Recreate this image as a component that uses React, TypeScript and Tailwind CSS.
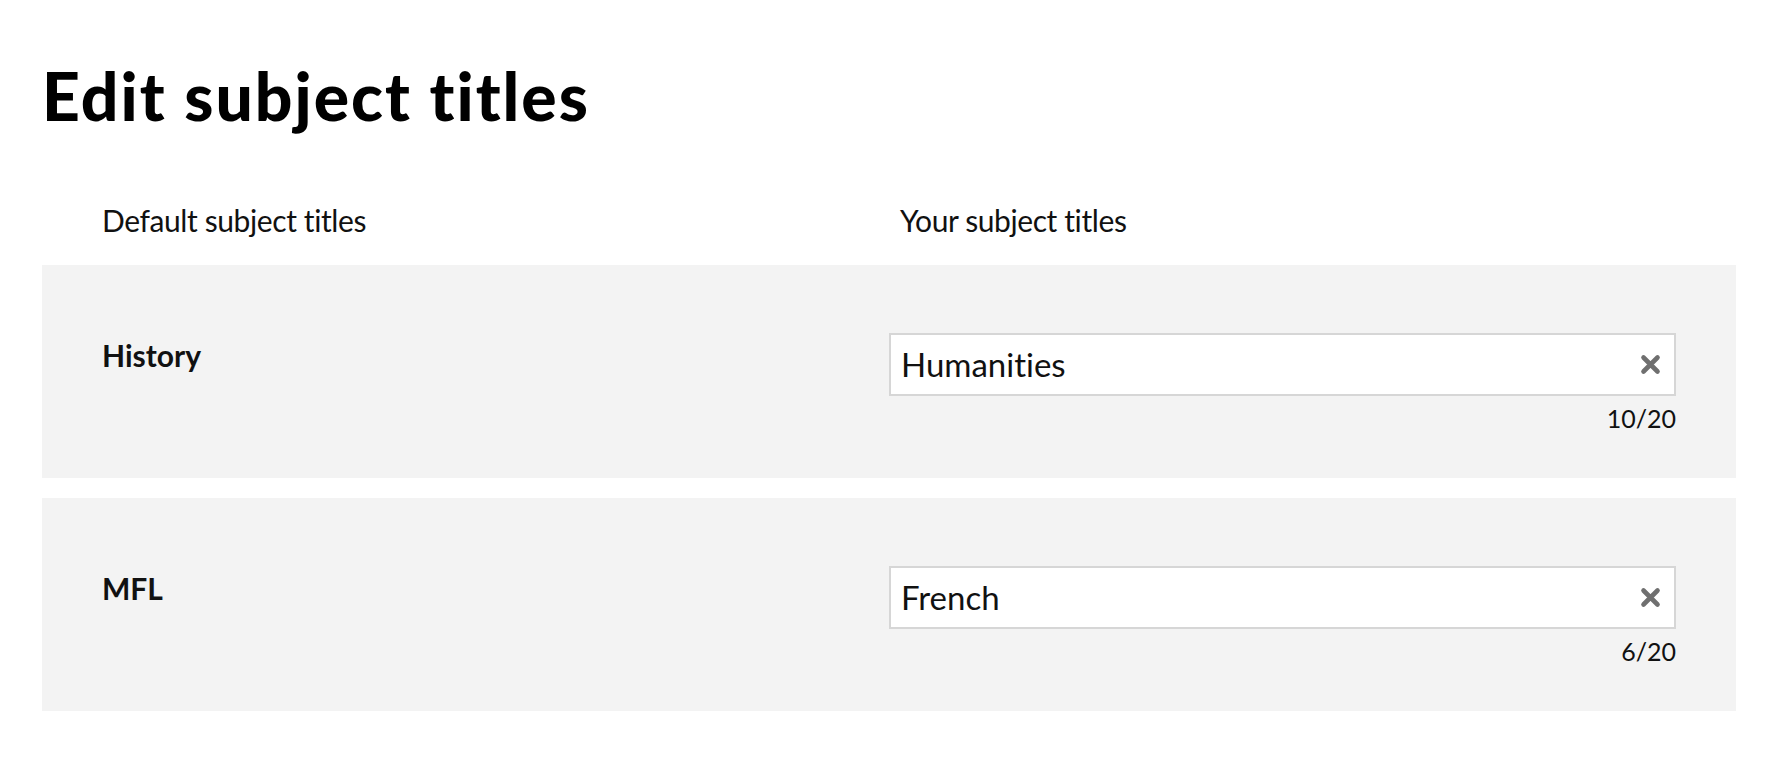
import { useState } from "react";

type SubjectRow = {
  id: string;
  defaultTitle: string;
  value: string;
};

const MAX_LENGTH = 20;

const INITIAL_ROWS: SubjectRow[] = [
  { id: "history", defaultTitle: "History", value: "Humanities" },
  { id: "mfl", defaultTitle: "MFL", value: "French" },
];

function ClearIcon() {
  return (
    <svg width="21" height="21" viewBox="0 0 21 21" aria-hidden="true">
      <path
        d="M3.5 3.5 L17.5 17.5 M17.5 3.5 L3.5 17.5"
        stroke="#6f6f6f"
        strokeWidth="4.6"
        strokeLinecap="round"
        fill="none"
      />
    </svg>
  );
}

function SubjectTitleRow({
  row,
  onChange,
}: {
  row: SubjectRow;
  onChange: (value: string) => void;
}) {
  return (
    <div className="grid grid-cols-2 bg-[#f3f3f3] px-[60px] pt-[68px] pb-[45px]">
      <div className="pt-[4px] text-[30px] leading-[36px] font-bold text-[#111]">
        {row.defaultTitle}
      </div>
      <div className="flex flex-col">
        <div className="flex h-[63px] items-center border-2 border-[#d6d6d6] bg-white pl-[10px] pr-[13px]">
          <input
            className="min-w-0 flex-1 bg-transparent text-[33px] text-[#111] outline-none [font-variant-ligatures:none]"
            value={row.value}
            maxLength={MAX_LENGTH}
            onChange={(event) => onChange(event.target.value)}
          />
          <button
            type="button"
            aria-label="Clear"
            className="flex h-[21px] w-[21px] items-center justify-center"
            onClick={() => onChange("")}
          >
            <ClearIcon />
          </button>
        </div>
        <div className="mt-[7px] text-right text-[25px] leading-[30px] text-[#111]">
          {row.value.length}/{MAX_LENGTH}
        </div>
      </div>
    </div>
  );
}

export default function App() {
  const [rows, setRows] = useState(INITIAL_ROWS);

  const updateRow = (id: string, value: string) => {
    setRows((current) =>
      current.map((row) => (row.id === id ? { ...row, value } : row)),
    );
  };

  return (
    <main
      className="min-h-screen bg-white px-[42px] pt-[56px] text-black [font-variant-ligatures:none]"
      style={{ fontFamily: "Lato, 'Noto Sans', sans-serif" }}
    >
      <h1 className="text-[66px] leading-[79px] font-black tracking-[2px]">
        Edit subject titles
      </h1>
      <div className="mt-[67px] grid grid-cols-2 px-[60px] text-[30px] leading-[36px] tracking-[-0.4px] text-[#111]">
        <span>Default subject titles</span>
        <span className="pl-[11px]">Your subject titles</span>
      </div>
      <div className="mt-[27px] flex flex-col gap-[20px]">
        {rows.map((row) => (
          <SubjectTitleRow
            key={row.id}
            row={row}
            onChange={(value) => updateRow(row.id, value)}
          />
        ))}
      </div>
    </main>
  );
}
